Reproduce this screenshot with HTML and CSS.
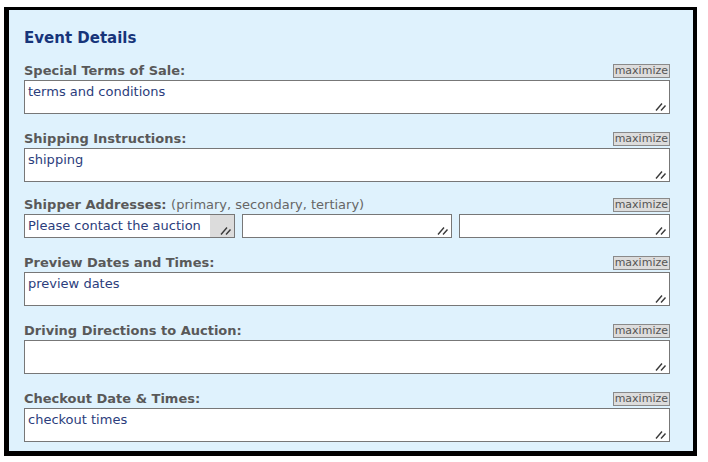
FILE: index.html
```html
<!DOCTYPE html>
<html>
<head>
<meta charset="utf-8">
<link rel="stylesheet" href="styles.css">
</head>
<body>
<div class="panel">
  <h2 class="title">Event Details</h2>
  <div class="fields">
    <div class="field">
      <div class="row"><span class="label">Special Terms of Sale:</span><span class="max">maximize</span></div>
      <div class="box"><textarea class="area">terms and conditions</textarea><svg class="grip" width="12" height="9" viewBox="0 0 12 9"><path d="M1 8.5L7 1.5M6 8.5L10.5 3.5" stroke="#3a3a3a" stroke-width="1.4" fill="none"/></svg></div>
    </div>
    <div class="field">
      <div class="row"><span class="label">Shipping Instructions:</span><span class="max">maximize</span></div>
      <div class="box"><textarea class="area">shipping</textarea><svg class="grip" width="12" height="9" viewBox="0 0 12 9"><path d="M1 8.5L7 1.5M6 8.5L10.5 3.5" stroke="#3a3a3a" stroke-width="1.4" fill="none"/></svg></div>
    </div>
    <div class="field addr-field">
      <div class="row"><span class="label">Shipper Addresses: <span class="hint">(primary, secondary, tertiary)</span></span><span class="max">maximize</span></div>
      <div class="addr">
        <div class="box sbox"><textarea class="small first">Please contact the auction</textarea><svg class="grip" width="12" height="9" viewBox="0 0 12 9"><path d="M1 8.5L7 1.5M6 8.5L10.5 3.5" stroke="#3a3a3a" stroke-width="1.4" fill="none"/></svg></div>
        <div class="box sbox"><textarea class="small"></textarea><svg class="grip" width="12" height="9" viewBox="0 0 12 9"><path d="M1 8.5L7 1.5M6 8.5L10.5 3.5" stroke="#3a3a3a" stroke-width="1.4" fill="none"/></svg></div>
        <div class="box sbox"><textarea class="small"></textarea><svg class="grip" width="12" height="9" viewBox="0 0 12 9"><path d="M1 8.5L7 1.5M6 8.5L10.5 3.5" stroke="#3a3a3a" stroke-width="1.4" fill="none"/></svg></div>
      </div>
    </div>
    <div class="field">
      <div class="row"><span class="label">Preview Dates and Times:</span><span class="max">maximize</span></div>
      <div class="box"><textarea class="area">preview dates</textarea><svg class="grip" width="12" height="9" viewBox="0 0 12 9"><path d="M1 8.5L7 1.5M6 8.5L10.5 3.5" stroke="#3a3a3a" stroke-width="1.4" fill="none"/></svg></div>
    </div>
    <div class="field">
      <div class="row"><span class="label">Driving Directions to Auction:</span><span class="max">maximize</span></div>
      <div class="box"><textarea class="area"></textarea><svg class="grip" width="12" height="9" viewBox="0 0 12 9"><path d="M1 8.5L7 1.5M6 8.5L10.5 3.5" stroke="#3a3a3a" stroke-width="1.4" fill="none"/></svg></div>
    </div>
    <div class="field">
      <div class="row"><span class="label">Checkout Date &amp; Times:</span><span class="max">maximize</span></div>
      <div class="box"><textarea class="area">checkout times</textarea><svg class="grip" width="12" height="9" viewBox="0 0 12 9"><path d="M1 8.5L7 1.5M6 8.5L10.5 3.5" stroke="#3a3a3a" stroke-width="1.4" fill="none"/></svg></div>
    </div>
  </div>
</div>
</body>
</html>
```

FILE: styles.css
```css
html, body {
  margin: 0;
  padding: 0;
  background: #ffffff;
}
body {
  font-family: "DejaVu Sans", Verdana, sans-serif;
}
.panel {
  margin: 7px 0 0 4px;
  width: 693px;
  height: 449px;
  box-sizing: border-box;
  border-style: solid;
  border-color: #000;
  border-width: 3px 4px 5px 5px;
  background: #dff2fd;
  padding: 19px 23px 0 15px;
}
.title {
  margin: 0;
  font-size: 15px;
  font-weight: bold;
  color: #17357a;
  line-height: 18px;
}
.fields {
  margin-top: 17px;
  display: flex;
  flex-direction: column;
  gap: 18px;
}
.field {
  display: flex;
  flex-direction: column;
  gap: 2px;
}
.addr-field {
  margin-top: -2px;
}
.row {
  display: flex;
  justify-content: space-between;
  align-items: flex-end;
  height: 14px;
}
.label {
  font-size: 13px;
  font-weight: bold;
  color: #595959;
  line-height: 14px;
}
.hint {
  font-weight: normal;
  color: #666;
}
.max {
  font-size: 11px;
  color: #555;
  background: #dcdcdc;
  border: 1px solid #8a8a8a;
  height: 14px;
  box-sizing: border-box;
  line-height: 12px;
  padding: 0 1px;
}
.box {
  position: relative;
}
.grip {
  position: absolute;
  right: 3px;
  bottom: 3px;
}
.area, .small {
  display: block;
  margin: 0;
  box-sizing: border-box;
  border: 1px solid #777;
  background: #fff;
  font-family: "DejaVu Sans", Verdana, sans-serif;
  font-size: 13px;
  color: #2b3d7c;
  padding: 3px 3px;
  outline: none;
  resize: none;
  width: 100%;
}
.area {
  height: 34px;
}
.addr {
  display: flex;
  gap: 7px;
}
.sbox {
  width: calc((100% - 14px) / 3);
  flex: none;
}
.small {
  height: 24px;
  overflow: hidden;
}
.first {
  background: linear-gradient(to right, #fff calc(100% - 24px), #dcdcdc calc(100% - 24px));
  padding-right: 24px;
}
```
